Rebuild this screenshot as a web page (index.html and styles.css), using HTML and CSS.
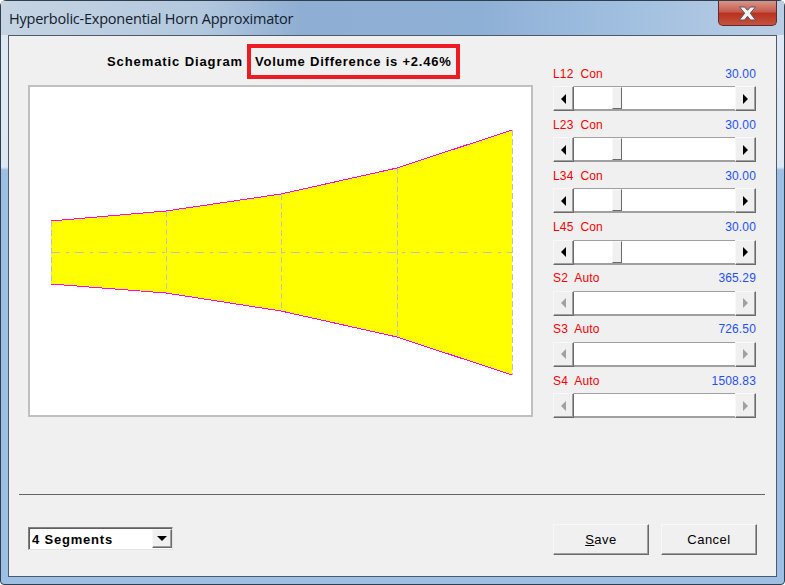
FILE: index.html
```html
<!DOCTYPE html>
<html lang="en">
<head>
<meta charset="utf-8">
<title>Hyperbolic-Exponential Horn Approximator</title>
<link rel="stylesheet" href="styles.css">
</head>
<body>
<div class="window">
  <div class="titlebar">
    <div class="title">Hyperbolic-Exponential Horn Approximator</div>
    <div class="close"><svg width="21" height="15" viewBox="0 0 21 15"><path d="M2.500 1h5l3 3.300 3-3.300h5l-5.200 6.200 5.200 6.800h-5l-3-3.700-3 3.700h-5l5.200-6.800z" fill="#f2f2f2" stroke="#5a5560" stroke-width="1"/></svg></div>
  </div>
  <div class="client">
    <div class="main">
      <div class="left">
        <div class="heading">
          <span class="schem">Schematic Diagram</span>
          <span class="volume">Volume Difference is +2.46%</span>
        </div>
        <div class="panel">
          <svg class="horn" width="501" height="328" viewBox="30 87 501 328">
            <polygon class="fill" points="51,221 166,211 281,194 397,168 512,130 512,375 397,337 281,311 166,293 51,284"/>
            <path class="dash" d="M51.500 221V284M166.500 211V293M281.500 194V311M397.500 168V337M512.500 130V375"/>
            <path class="dash center" d="M51 252.500H512"/>
            <polyline class="edge" points="51,221 166,211 281,194 397,168 512,130"/>
            <polyline class="edge" points="51,284 166,293 281,311 397,337 512,375"/>
          </svg>
        </div>
      </div>
      <div class="controls">
        <div class="ctrl"><div class="lab"><span>L12&nbsp; Con</span><span class="val">30.00</span></div>
          <div class="sb"><span class="btn"><i class="al"></i></span><span class="trk"><span class="thumb"></span></span><span class="btn"><i class="ar"></i></span></div></div>
        <div class="ctrl"><div class="lab"><span>L23&nbsp; Con</span><span class="val">30.00</span></div>
          <div class="sb"><span class="btn"><i class="al"></i></span><span class="trk"><span class="thumb"></span></span><span class="btn"><i class="ar"></i></span></div></div>
        <div class="ctrl"><div class="lab"><span>L34&nbsp; Con</span><span class="val">30.00</span></div>
          <div class="sb"><span class="btn"><i class="al"></i></span><span class="trk"><span class="thumb"></span></span><span class="btn"><i class="ar"></i></span></div></div>
        <div class="ctrl"><div class="lab"><span>L45&nbsp; Con</span><span class="val">30.00</span></div>
          <div class="sb"><span class="btn"><i class="al"></i></span><span class="trk"><span class="thumb"></span></span><span class="btn"><i class="ar"></i></span></div></div>
        <div class="ctrl"><div class="lab"><span>S2&nbsp; Auto</span><span class="val">365.29</span></div>
          <div class="sb off"><span class="btn"><i class="al"></i></span><span class="trk"></span><span class="btn"><i class="ar"></i></span></div></div>
        <div class="ctrl"><div class="lab"><span>S3&nbsp; Auto</span><span class="val">726.50</span></div>
          <div class="sb off"><span class="btn"><i class="al"></i></span><span class="trk"></span><span class="btn"><i class="ar"></i></span></div></div>
        <div class="ctrl"><div class="lab"><span>S4&nbsp; Auto</span><span class="val">1508.83</span></div>
          <div class="sb off"><span class="btn"><i class="al"></i></span><span class="trk"></span><span class="btn"><i class="ar"></i></span></div></div>
      </div>
    </div>
    <div class="rule"></div>
    <div class="footer">
      <div class="combo"><span class="combo-text">4 Segments</span><span class="combo-btn"><i class="ad"></i></span></div>
      <div class="actions">
        <button class="push"><u>S</u>ave</button>
        <button class="push">Cancel</button>
      </div>
    </div>
  </div>
</div>
</body>
</html>
```

FILE: styles.css
```css
* { box-sizing: border-box; }
html, body { margin: 0; padding: 0; }
body { width: 785px; height: 585px; overflow: hidden; font-family: "Liberation Sans", Arial, sans-serif; }

.window {
  width: 785px; height: 585px;
  display: flex; flex-direction: column;
  padding: 0 7px 7px;
  position: relative;
  border: 1px solid #2f3f4f;
  border-radius: 6px 6px 4px 4px;
  background: linear-gradient(to bottom, #dfe9f3 0, #dce8f3 166px, #9dbfe3 169px, #9dbfe3 100%);
}
.titlebar {
  height: 34px; margin: 0 -7px; padding-left: 8px;
  display: flex; align-items: center;
  background: linear-gradient(to right, #c6d4e3 0, #b3c8de 200px, #8faed3 300px, #8fb0d6 480px, #a0bfe0 620px, #b9cde4 784px);
}
.title { font: 14.500px "Open Sans", "Noto Sans", sans-serif; color: #10202c; letter-spacing: -.22px; }
.close {
  position: absolute; top: 0; right: 7px;
  width: 59px; height: 25px;
  display: flex; align-items: center; justify-content: center;
  border: 1px solid #5e2a2a; border-top: 0;
  border-radius: 0 0 5px 5px;
  background: linear-gradient(to bottom, #d9968a 0, #c65a4c 45%, #b8321f 52%, #c5523f 100%);
}

.client {
  flex: 1; display: flex; flex-direction: column;
  background: #f0f0f0;
  border: 1px solid #4c5a69;
  min-height: 0;
}
.main { display: flex; height: 458px; }
.left { width: 544px; padding: 8px 0 0 19px; }
.heading { display: flex; justify-content: flex-end; align-items: center; height: 35px; margin-right: 93px; margin-bottom: 6px; }
.schem, .volume { font-size: 13px; font-weight: 700; color: #000; }
.schem { margin-right: 4px; letter-spacing: .9px; }
.volume { display: flex; align-items: center; height: 35px; padding: 0 4px; border: 4px solid #ed1c24; width: 213px; white-space: nowrap; letter-spacing: .77px; }
.panel { width: 505px; height: 332px; background: #fff; border: 2px solid #c0c0c0; }
.horn { display: block; }
.fill { fill: #ffff00; stroke: none; }
.dash { fill: none; stroke: #c0c0c0; stroke-width: 1; stroke-dasharray: 6 3; }
.center { stroke-dasharray: 9 6 3 6; }
.edge { fill: none; stroke: #ff00ff; stroke-width: 1; shape-rendering: crispEdges; }

.controls { width: 204px; padding-top: 30px; display: flex; flex-direction: column; gap: 6.200px; }
.ctrl { height: 45px; display: flex; flex-direction: column; }
.lab { height: 15px; margin-bottom: 5px; flex: none; display: flex; justify-content: space-between; align-items: center; font-size: 12px; color: #fe0000; letter-spacing: .15px; padding-right: 1px; }
.val { color: #1f4fff; }
.sb { height: 25px; flex: none; display: flex; margin-right: 1px; }
.btn {
  width: 21px; flex: none; display: flex; align-items: center; justify-content: center;
  background: #f0f0f0;
  border: 1px solid; border-color: #f8f8f8 #6a6a6a #6a6a6a #f8f8f8;
  box-shadow: inset -1px -1px 0 #a0a0a0;
}
.trk {
  flex: 1; display: block; padding-left: 38px; background: #fff;
  border-top: 1px solid #a0a0a0; border-bottom: 2px solid #a0a0a0;
}
.thumb {
  display: block; width: 10px; height: 100%; background: #f0f0f0;
  border: 1px solid; border-color: #f8f8f8 #6a6a6a #6a6a6a #f8f8f8;
}
.al, .ar { width: 0; height: 0; border: 5px solid transparent; border-left-width: 0; border-right: 5px solid #000; }
.ar { border-right-width: 0; border-left: 5px solid #000; }
.off .al { border-right-color: #a0a0a0; }
.off .ar { border-left-color: #a0a0a0; }

.rule { height: 1px; margin: 0 11px 0 10px; background: #646464; }
.footer { flex: 1; display: flex; justify-content: space-between; align-items: flex-start; padding: 29px 19px 0 19px; }
.combo {
  margin-top: 3px; width: 145px; height: 23px; display: flex; align-items: center;
  background: #fff;
  border: 1px solid; border-color: #808080 #e4e4e4 #e4e4e4 #808080;
  box-shadow: inset 1px 1px 0 #606060;
}
.combo-text { flex: 1; padding: 1px 0 0 3px; font-size: 13px; font-weight: 700; letter-spacing: .8px; color: #000; }
.combo-btn {
  width: 20px; height: 19px; display: flex; align-items: center; justify-content: center;
  background: #f0f0f0;
  border: 1px solid; border-color: #f8f8f8 #6a6a6a #6a6a6a #f8f8f8;
  box-shadow: inset -1px -1px 0 #a0a0a0;
}
.ad { width: 0; height: 0; border: 5px solid transparent; border-bottom-width: 0; border-top: 5px solid #000; }
.actions { display: flex; gap: 12px; }
.push {
  width: 96px; height: 31px; padding: 0; margin: 0;
  font: 13px "Liberation Sans", Arial, sans-serif; color: #000; letter-spacing: .5px;
  background: #f0f0f0;
  border: 1px solid; border-color: #f8f8f8 #6a6a6a #6a6a6a #f8f8f8;
  box-shadow: inset -1px -1px 0 #a0a0a0;
}
```
